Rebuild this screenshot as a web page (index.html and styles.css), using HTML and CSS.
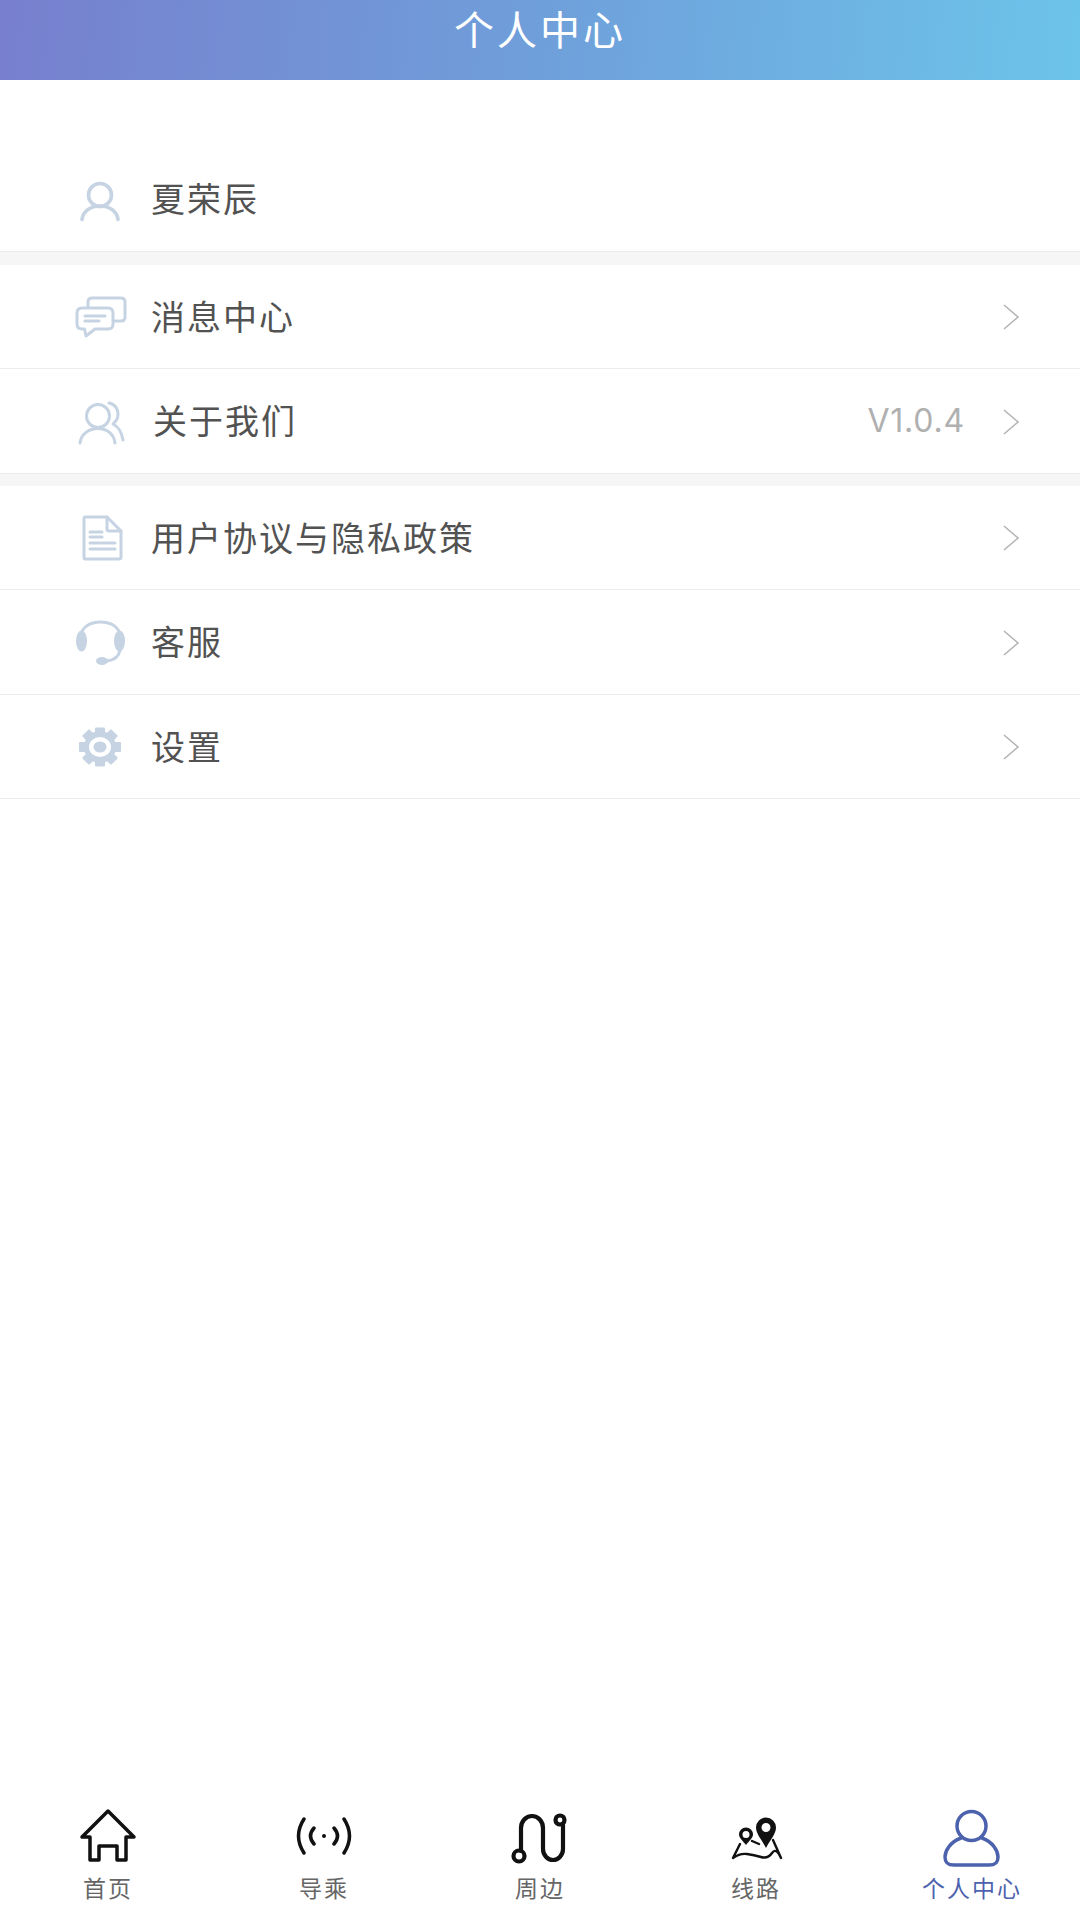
FILE: index.html
```html
<!DOCTYPE html>
<html lang="zh-CN">
<head>
    <meta charset="UTF-8">
    <meta name="viewport" content="width=device-width, initial-scale=1.0">
    <title>个人中心</title>
    <link rel="stylesheet" href="styles.css">
</head>
<body>
    <header class="top-bar">个人中心</header>

    <main class="content">
        <section class="group group-user">
            <div class="row">
                <svg class="row-icon row-icon-bold" viewBox="0 0 56 56">
                    <circle cx="28" cy="24" r="11.500"/>
                    <path d="M10 48.500C11 40 19 35 28 35S45 40 46 48.500"/>
                </svg>
                <span class="row-label">夏荣辰</span>
            </div>
        </section>

        <section class="group">
            <div class="row">
                <svg class="row-icon" viewBox="0 0 56 56">
                    <path d="M16 18V14Q16 10 20 10H49Q53 10 53 14V29Q53 33 49 33H43"/>
                    <path d="M10 20H36Q41 20 41 25V36Q41 41 36 41H23L14 48L12.500 41H10Q5 41 5 36V25Q5 20 10 20Z"/>
                    <path d="M13 28H33M13 33H27"/>
                </svg>
                <span class="row-label">消息中心</span>
                <svg class="chevron" viewBox="0 0 16 26"><path d="M1 1L15 13L1 25"/></svg>
            </div>
            <div class="row">
                <svg class="row-icon" viewBox="0 0 56 56">
                    <circle cx="26" cy="23" r="11.500"/>
                    <path d="M8 50C9 41 17 35.500 26 35.500S42 41 43 50"/>
                    <path d="M37 10C43 11 46 16 46 21S44 28 41 31C47 34 50 41 51 47"/>
                </svg>
                <span class="row-label row-label-shift">关于我们</span>
                <span class="row-value">V1.0.4</span>
                <svg class="chevron" viewBox="0 0 16 26"><path d="M1 1L15 13L1 25"/></svg>
            </div>
        </section>

        <section class="group">
            <div class="row">
                <svg class="row-icon" viewBox="0 0 56 56">
                    <path d="M13 8H35L49 22V48Q49 50 47 50H13Q12 50 12 48V10Q12 8 13 8Z"/>
                    <path d="M35 8V20Q35 22 37 22H49"/>
                    <path d="M18 23H30M18 28H30M18 34H43M18 40H43"/>
                </svg>
                <span class="row-label">用户协议与隐私政策</span>
                <svg class="chevron" viewBox="0 0 16 26"><path d="M1 1L15 13L1 25"/></svg>
            </div>
            <div class="row">
                <svg class="row-icon" viewBox="0 0 56 56">
                    <path d="M8 24C9 13 18 8 28.500 8S48 13 49 24"/>
                    <ellipse class="solid" cx="9.500" cy="27" rx="5.500" ry="10.500"/>
                    <ellipse class="solid" cx="47.500" cy="27" rx="5.500" ry="10.500"/>
                    <path d="M48 36C47 42 43 46 35 47"/>
                    <ellipse class="solid" cx="30" cy="47" rx="6" ry="4"/>
                </svg>
                <span class="row-label">客服</span>
                <svg class="chevron" viewBox="0 0 16 26"><path d="M1 1L15 13L1 25"/></svg>
            </div>
            <div class="row">
                <svg class="row-icon" viewBox="0 0 56 56">
                    <g class="solid">
                        <circle cx="28" cy="29" r="16"/>
                        <rect x="23" y="9.500" width="10" height="39" rx="1"/>
                        <rect x="23" y="8.500" width="10" height="41" rx="1" transform="rotate(45 28 29)"/>
                        <rect x="23" y="8" width="10" height="42" rx="1" transform="rotate(90 28 29)"/>
                        <rect x="23" y="8.500" width="10" height="41" rx="1" transform="rotate(135 28 29)"/>
                    </g>
                    <ellipse class="gear-hole" cx="28" cy="29" rx="11" ry="10"/>
                    <ellipse class="solid" cx="28" cy="29" rx="6.500" ry="5.500"/>
                </svg>
                <span class="row-label">设置</span>
                <svg class="chevron" viewBox="0 0 16 26"><path d="M1 1L15 13L1 25"/></svg>
            </div>
        </section>
    </main>

    <nav class="tab-bar">
        <div class="tab">
            <svg class="tab-icon" viewBox="0 0 60 60">
                <path d="M30 4L4 30H12V53H21V39H39V53H48V30H56Z"/>
            </svg>
            <span class="tab-label">首页</span>
        </div>
        <div class="tab">
            <svg class="tab-icon" viewBox="0 0 60 60">
                <path d="M10 12Q-1 29 10 46M50 12Q61 29 50 46M20 21Q13 29 20 37M40 21Q47 29 40 37"/>
                <circle class="tab-fill" cx="30" cy="29" r="2"/>
            </svg>
            <span class="tab-label">导乘</span>
        </div>
        <div class="tab">
            <svg class="tab-icon tab-icon-bold" viewBox="0 0 60 60">
                <path d="M11 44V21A11 12 0 0 1 33 21V42A10 11 0 0 0 53 42V18"/>
                <circle cx="9" cy="49" r="5.500"/>
                <circle cx="50" cy="13" r="4.500"/>
            </svg>
            <span class="tab-label">周边</span>
        </div>
        <div class="tab">
            <svg class="tab-icon tab-icon-thin" viewBox="0 0 60 60">
                <path d="M14 37L7 51Q14 46 21 47T35 50T46 46T55 51L47 33M26 34L33 37"/>
                <path class="tab-fill" fill-rule="evenodd" d="M40 10.500A10 10 0 0 1 50 20.500C50 27 44 33 40 41C36 33 30 27 30 20.500A10 10 0 0 1 40 10.500ZM40 16A4.500 4.500 0 1 0 40 25A4.500 4.500 0 1 0 40 16Z"/>
                <path class="tab-fill" fill-rule="evenodd" d="M20 20.500A7 7 0 0 1 27 27.500C27 31 23 34 20 38C17 34 13 31 13 27.500A7 7 0 0 1 20 20.500ZM20 24A3.500 3.500 0 1 0 20 31A3.500 3.500 0 1 0 20 24Z"/>
            </svg>
            <span class="tab-label">线路</span>
        </div>
        <div class="tab tab-active">
            <svg class="tab-icon" viewBox="0 0 60 60">
                <circle cx="29.500" cy="19" r="14.500"/>
                <path d="M19 31C8 35 3 44 3 50C3 56 6 58 12 58H47C53 58 56 56 56 50C56 44 51 35 40 31"/>
            </svg>
            <span class="tab-label">个人中心</span>
        </div>
    </nav>
</body>
</html>
```

FILE: styles.css
```css
html, body {
    height: 100%;
}

body {
    margin: 0;
    display: flex;
    flex-direction: column;
    background: #fff;
    color: #525252;
    font-family: "Noto Sans CJK SC", "Liberation Sans", sans-serif;
}

.top-bar {
    height: 80px;
    box-sizing: border-box;
    padding-top: 3px;
    text-align: center;
    font-size: 40px;
    line-height: 50px;
    letter-spacing: 3px;
    color: #fff;
    background: linear-gradient(95deg, #777fce, #6f9fda 50%, #6cc4ea);
}

.content {
    flex: 1;
}

.group {
    border-bottom: 12px solid #f6f6f6;
}

.group:last-child {
    border-bottom: 0;
}

.group-user {
    padding-top: 67px;
    border-bottom-width: 13px;
}

.row {
    height: 104.5px;
    box-sizing: border-box;
    display: flex;
    align-items: center;
    padding: 0 60px 0 72px;
    border-bottom: 1px solid #ececec;
}

.row-icon {
    width: 56px;
    height: 56px;
    flex: none;
    fill: none;
    stroke: #c6d3e3;
    stroke-width: 3;
    stroke-linecap: round;
    stroke-linejoin: round;
}

.row-icon-bold {
    stroke-width: 3.6;
}

.row-icon .solid {
    fill: #c6d3e3;
    stroke: none;
}

.row-icon .gear-hole {
    fill: #fff;
    stroke: none;
}

.row-label {
    margin-left: 23px;
    margin-bottom: 2px;
    font-size: 34px;
    letter-spacing: 2px;
}

.row-label-shift {
    margin-left: 25px;
}

.row-value {
    margin-left: auto;
    margin-right: 38px;
    font-family: "Inter", sans-serif;
    font-size: 32px;
    letter-spacing: 0.8px;
    color: #b0b0b0;
}

.chevron {
    width: 16px;
    height: 26px;
    flex: none;
    margin-left: auto;
    margin-top: 2px;
    margin-right: 1px;
    fill: none;
    stroke: #b4b4b4;
    stroke-width: 1.6;
}

.row-value + .chevron {
    margin-left: 0;
}

.tab-bar {
    display: grid;
    grid-template-columns: repeat(5, 1fr);
    padding-bottom: 18px;
}

.tab {
    display: flex;
    flex-direction: column;
    align-items: center;
    color: #666;
}

.tab-icon {
    width: 60px;
    height: 60px;
    fill: none;
    stroke: #111;
    stroke-width: 3.5;
    stroke-linecap: round;
    stroke-linejoin: round;
}

.tab-icon-bold {
    stroke-width: 4.2;
}

.tab-icon-thin {
    stroke-width: 2.4;
}

.tab-icon .tab-fill {
    fill: #111;
    stroke: none;
}

.tab-label {
    margin-top: 5px;
    font-size: 23px;
    line-height: 30px;
    letter-spacing: 2px;
}

.tab-active {
    color: #4c62ad;
}

.tab-active .tab-icon {
    stroke: #4c62ad;
}
```
